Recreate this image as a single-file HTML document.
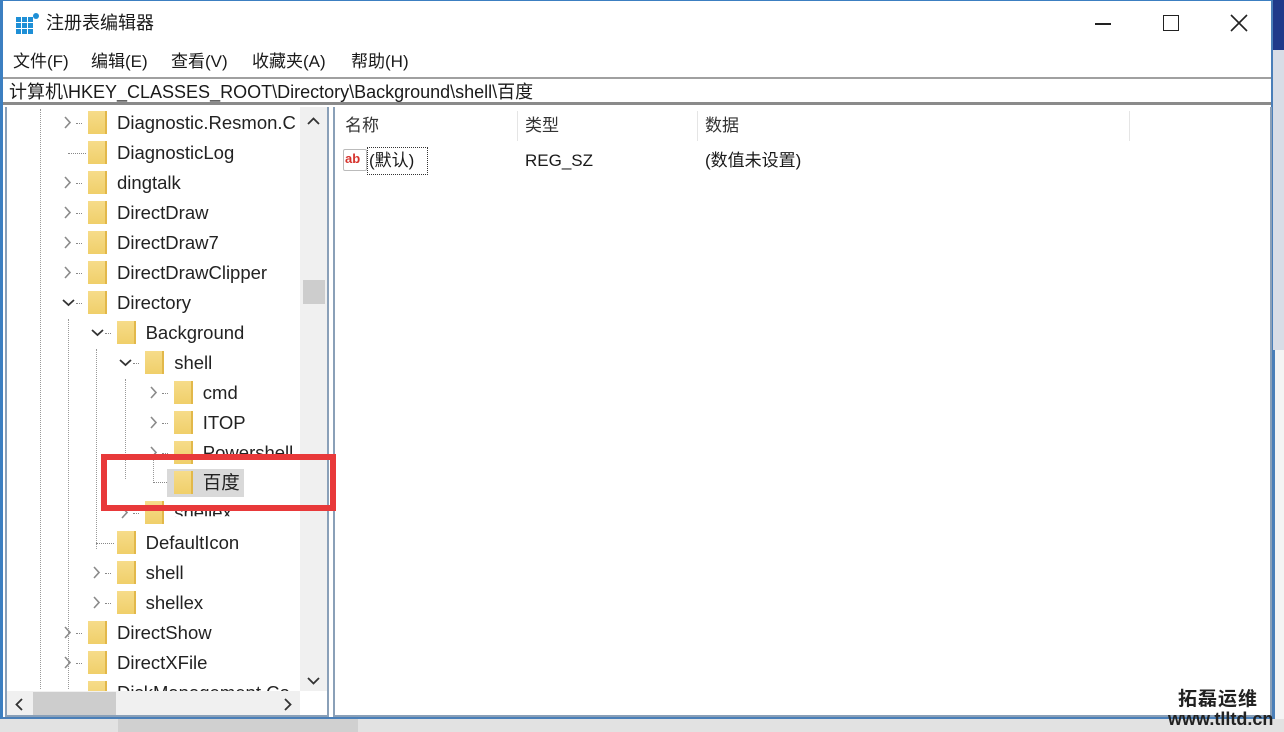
<!DOCTYPE html>
<html><head><meta charset="utf-8"><style>
*{margin:0;padding:0;box-sizing:border-box}
html,body{width:1284px;height:732px;overflow:hidden}
body{background:#e6e6e6;position:relative;font-family:"Liberation Sans","Noto Sans CJK SC",sans-serif;color:#1a1a1a}
.abs{position:absolute}
#win{left:0;top:0;width:1273px;height:719px;background:#fff;border-left:3px solid #3c7fc1;border-top:1px solid #3c7fc1;border-right:2px solid #4a7fb8;border-bottom:2px solid #4a7fb8}
.t{position:absolute;font-size:18.5px;white-space:nowrap;line-height:22px}
.fold{position:absolute;width:19px;height:23px;background:linear-gradient(#f6dc8a,#f0cf6a);border-right:2px solid #e2b84a}
.dot{position:absolute;border-top:1px dotted #888;width:9px}
.vd{position:absolute;border-left:1px dotted #999}
</style></head><body>
<div class="abs" style="left:1273px;top:0;width:11px;height:50px;background:#1f3a8a"></div>
<div class="abs" style="left:1273px;top:50px;width:11px;height:300px;background:#d8dde6"></div>
<div class="abs" style="left:1273px;top:350px;width:11px;height:369px;background:#f4f4f4;border-left:2px solid #4a7fb8"></div>
<div class="abs" style="left:0;top:719px;width:1284px;height:13px;background:#e2e2e2"></div>
<div class="abs" style="left:118px;top:719px;width:240px;height:13px;background:#d0d0d0"></div>

<div id="win" class="abs">
<svg class="abs" style="left:13px;top:12px" width="24" height="22" viewBox="0 0 24 22"><g fill="#1e8fd6"><rect x="0" y="4" width="5" height="5"/><rect x="6" y="4" width="5" height="5"/><rect x="12" y="4" width="5" height="5"/><rect x="0" y="10" width="5" height="5"/><rect x="6" y="10" width="5" height="5"/><rect x="12" y="10" width="5" height="5"/><rect x="0" y="16" width="5" height="5"/><rect x="6" y="16" width="5" height="5"/><rect x="12" y="16" width="5" height="5"/></g><circle cx="20" cy="3" r="3" fill="#1e8fd6"/></svg>
<div class="t" style="left:43px;top:11px;font-size:18px">注册表编辑器</div>
<div class="abs" style="left:1092px;top:22px;width:16px;height:1.5px;background:#222"></div>
<div class="abs" style="left:1160px;top:14px;width:16px;height:16px;border:1.5px solid #222"></div>
<svg class="abs" style="left:1227px;top:13px" width="18" height="18"><path d="M1 1L17 17M17 1L1 17" stroke="#222" stroke-width="1.6"/></svg>
<div class="t" style="left:10px;top:50px;font-size:17px">文件(F)</div>
<div class="t" style="left:88px;top:50px;font-size:17px">编辑(E)</div>
<div class="t" style="left:168px;top:50px;font-size:17px">查看(V)</div>
<div class="t" style="left:249px;top:50px;font-size:17px">收藏夹(A)</div>
<div class="t" style="left:348px;top:50px;font-size:17px">帮助(H)</div>
<div class="abs" style="left:0;top:76px;width:1268px;height:28px;border-top:2px solid #a0a0a0;border-bottom:3px solid #8a8a8a"></div>
<div class="t" style="left:6px;top:80px;font-size:18px">计算机\HKEY_CLASSES_ROOT\Directory\Background\shell\百度</div>
<div class="abs" style="left:2px;top:106px;width:324px;height:610px;border:2px solid #8aa0b8;border-top:none"></div>

<div class="abs" style="left:4px;top:106px;width:293px;height:584px;overflow:hidden">
<div class="abs" style="left:-7px;top:-106px;width:300px;height:600px">
<div class="vd" style="left:40px;top:108px;height:580px"></div>
<div class="vd" style="left:68px;top:318px;height:370px"></div>
<div class="vd" style="left:96px;top:348px;height:200px"></div>
<div class="vd" style="left:125px;top:378px;height:100px"></div>
<div class="vd" style="left:153px;top:458px;height:22px"></div>
<div class="abs" style="left:153px;top:481px;width:16px;border-top:1px dotted #888"></div>
<script>
const rows=[[0,'Diagnostic.Resmon.C','>'],[0,'DiagnosticLog',''],[0,'dingtalk','>'],[0,'DirectDraw','>'],[0,'DirectDraw7','>'],[0,'DirectDrawClipper','>'],[0,'Directory','v'],[1,'Background','v'],[2,'shell','v'],[3,'cmd','>'],[3,'ITOP','>'],[3,'Powershell','>'],[3,'百度',''],[2,'shellex','>'],[1,'DefaultIcon',''],[1,'shell','>'],[1,'shellex','>'],[0,'DirectShow','>'],[0,'DirectXFile','>'],[0,'DiskManagement.Co','']];
let h='';
rows.forEach((r,i)=>{const y=110+i*30,l=r[0],ax=63+l*28.6,fx=88+l*28.6,tx=117+l*28.6;
if(r[2]=='>')h+=`<svg class="abs" style="left:${ax+1}px;top:${y+5}px" width="8" height="13"><path d="M1 1L6 6.5L1 12" stroke="#8a8a8a" stroke-width="1.6" fill="none"/></svg>`;
if(r[2]=='v')h+=`<svg class="abs" style="left:${ax-1}px;top:${y+8}px" width="13" height="8"><path d="M1 1L6.5 6L12 1" stroke="#333" stroke-width="1.8" fill="none"/></svg>`;
if(r[2]!=='')h+=`<div class="dot" style="left:${ax+13}px;top:${y+12}px;width:6px"></div>`;else if(i==1)h+=`<div class="dot" style="left:68px;top:${y+12}px;width:18px"></div>`;else if(i==14)h+=`<div class="dot" style="left:96px;top:${y+12}px;width:18px"></div>`;
if(i==12)h+=`<div class="abs" style="left:167px;top:${y-2}px;width:77px;height:28px;background:#d9d9d9"></div>`;
h+=`<div class="fold" style="left:${fx}px;top:${y}px"></div><div class="t" style="left:${tx}px;top:${y+1}px;color:#222;${i==11||i==13?'clip-path:inset(0 0 35% 0);':''}">${r[1]}</div>`;});
document.write(h);
</script>
</div></div>

<div class="abs" style="left:297px;top:106px;width:27px;height:584px;background:#f0f0f0"></div>
<div class="abs" style="left:300px;top:279px;width:22px;height:24px;background:#cdcdcd"></div>
<svg class="abs" style="left:304px;top:116px" width="13" height="8"><path d="M1 7L6.5 1.5L12 7" stroke="#333" stroke-width="1.8" fill="none"/></svg>
<svg class="abs" style="left:304px;top:676px" width="13" height="8"><path d="M1 1L6.5 6.5L12 1" stroke="#333" stroke-width="1.8" fill="none"/></svg>
<div class="abs" style="left:4px;top:690px;width:293px;height:24px;background:#f0f0f0"></div>
<div class="abs" style="left:30px;top:691px;width:83px;height:23px;background:#cdcdcd"></div>
<svg class="abs" style="left:12px;top:697px" width="8" height="13"><path d="M7 1L1.5 6.5L7 12" stroke="#333" stroke-width="1.8" fill="none"/></svg>
<svg class="abs" style="left:281px;top:697px" width="8" height="13"><path d="M1 1L6.5 6.5L1 12" stroke="#333" stroke-width="1.8" fill="none"/></svg>

<div class="abs" style="left:330px;top:106px;width:939px;height:610px;border:2px solid #8aa0b8;border-top:none"></div>
<div class="abs" style="left:514px;top:110px;height:30px;border-left:1px solid #e5e5e5"></div>
<div class="abs" style="left:694px;top:110px;height:30px;border-left:1px solid #e5e5e5"></div>
<div class="abs" style="left:1126px;top:110px;height:30px;border-left:1px solid #e5e5e5"></div>
<div class="t" style="left:342px;top:114px;font-size:17px;color:#333">名称</div>
<div class="t" style="left:522px;top:114px;font-size:17px;color:#333">类型</div>
<div class="t" style="left:702px;top:114px;font-size:17px;color:#333">数据</div>
<div class="abs" style="left:340px;top:148px;width:24px;height:22px;background:#fff;border:1px solid #bbb;border-radius:2px"></div>
<div class="t" style="left:342px;top:147px;font-size:13px;font-weight:bold;color:#d6322c">ab</div>
<div class="abs" style="left:364px;top:146px;width:61px;height:28px;border:1px dotted #333"></div>
<div class="t" style="left:366px;top:149px;font-size:17px">(默认)</div>
<div class="t" style="left:522px;top:149px;font-size:17px">REG_SZ</div>
<div class="t" style="left:702px;top:149px;font-size:17px">(数值未设置)</div>
</div>

<div class="abs" style="left:101px;top:454px;width:235px;height:57px;border:6px solid #e8393a"></div>
<div class="t" style="left:1178px;top:690px;font-size:19px;line-height:20px;font-weight:bold;color:#222;letter-spacing:1px">拓磊运维</div>
<div class="t" style="left:1168px;top:709px;font-size:18px;line-height:20px;font-weight:bold;color:#222">www.tlltd.cn</div>
</body></html>
